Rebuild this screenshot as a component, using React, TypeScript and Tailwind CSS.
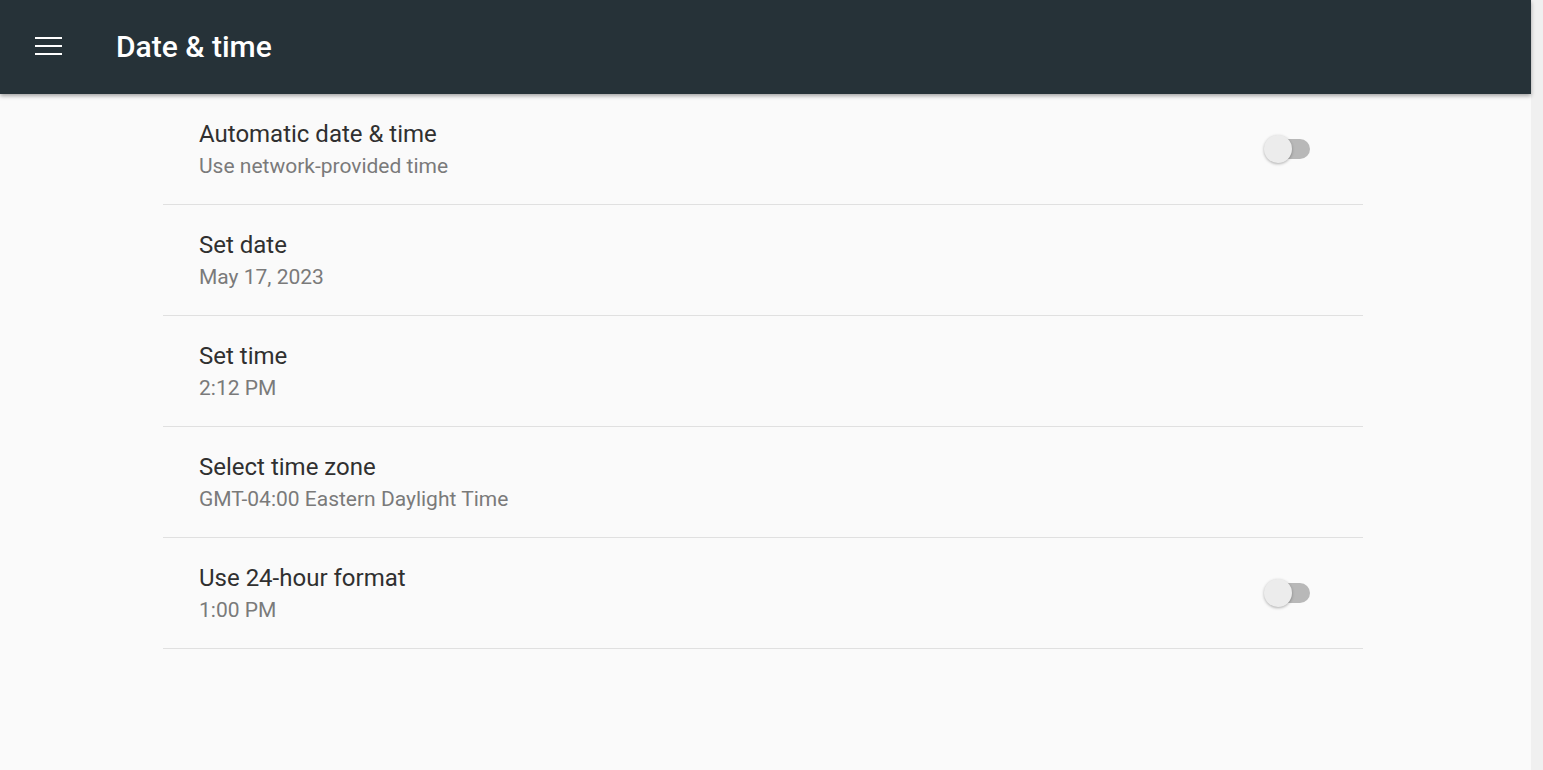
import React from "react";

const rows = [
  { title: "Automatic date & time", sub: "Use network-provided time", toggle: true },
  { title: "Set date", sub: "May 17, 2023" },
  { title: "Set time", sub: "2:12 PM" },
  { title: "Select time zone", sub: "GMT-04:00 Eastern Daylight Time" },
  { title: "Use 24-hour format", sub: "1:00 PM", toggle: true },
];

const Toggle: React.FC = () => (
  <div className="relative w-[46px] h-[28px] flex items-center">
    <div className="ml-[6px] w-[40px] h-[20px] rounded-full bg-[#b8b8b8]" />
    <div className="absolute left-0 top-0 w-[28px] h-[28px] rounded-full bg-[#ececec] shadow-[0_1px_3px_rgba(0,0,0,0.3)]" />
  </div>
);

const App: React.FC = () => {
  return (
    <div className="flex h-[770px] w-full overflow-hidden bg-[#fafafa]" style={{ fontFamily: "Roboto, 'Noto Sans', sans-serif" }}>
      <div className="flex-1 flex flex-col">
        <header className="h-[94px] pb-[2px] bg-[#263238] flex items-center shadow-[0_2px_4px_rgba(0,0,0,0.35)] relative z-10">
          <div className="ml-[35px] w-[27px] flex flex-col gap-[6px]">
            <div className="h-[2px] bg-white" />
            <div className="h-[2px] bg-white" />
            <div className="h-[2px] bg-white" />
          </div>
          <h1 className="ml-[54px] text-[30px] font-medium text-white">Date &amp; time</h1>
        </header>
        <div className="ml-[163px] w-[1200px]">
          {rows.map((r, i) => (
            <div
              key={i}
              className="h-[111px] flex items-center justify-between pl-[36px] pr-[53px] border-b border-[#e0e0e0]"
            >
              <div className="pt-[2px]">
                <div className="text-[24px] leading-[32px] text-[#303030]">{r.title}</div>
                <div className="text-[21px] leading-[32px] text-[#7a7a7a]">{r.sub}</div>
              </div>
              {r.toggle && <Toggle />}
            </div>
          ))}
        </div>
      </div>
      <div className="w-[12px] h-full bg-[#f0f0f0]" />
    </div>
  );
};

export default App;
